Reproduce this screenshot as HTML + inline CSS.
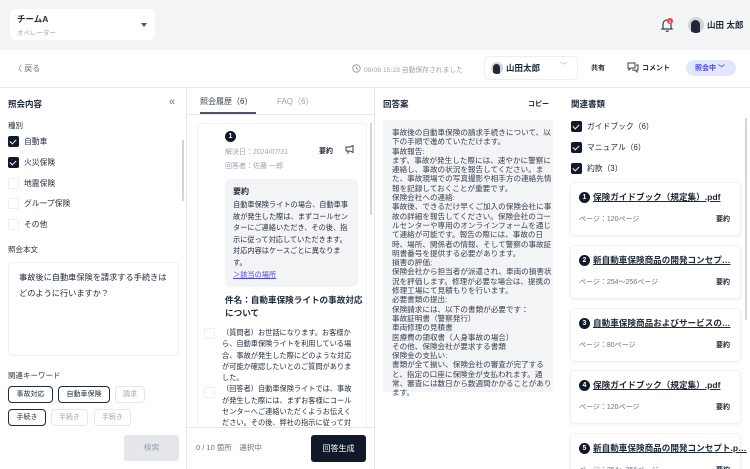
<!DOCTYPE html>
<html style="width:750px;height:469px;overflow:hidden"><head><meta charset="utf-8">
<style>
*{box-sizing:border-box;margin:0;padding:0}
body{width:750px;height:469px;overflow:hidden;position:relative;background:#fff;font-family:"Liberation Sans","Noto Sans CJK JP",sans-serif;color:#1f2937;font-size:8px}
.a{position:absolute;white-space:nowrap}
.b{font-weight:bold}
.g{color:#9ca3af}
.cb{position:absolute;width:11px;height:11px;border-radius:2px;background:#111827}
.cb:after{content:"";position:absolute;left:3px;top:1.5px;width:3px;height:5px;border:solid #fff;border-width:0 1.3px 1.3px 0;transform:rotate(45deg)}
.ce{position:absolute;width:11px;height:11px;border-radius:2px;border:1px solid #eceef1;background:#fff}
.chip{position:absolute;height:17px;border-radius:4px;font-size:7px;text-align:center;line-height:15px}
.chip.on{border:1.3px solid #1f2937}
.chip.off{border:1px solid #e5e7eb;color:#9ca3af}
.num{display:inline-block;width:11px;height:11px;border-radius:50%;background:#111827;color:#fff;font-size:7px;font-weight:bold;text-align:center;line-height:11px;vertical-align:middle}
.card{position:absolute;left:570px;width:171px;height:54px;background:#fff;border:1px solid #f0f1f3;border-radius:4px;box-shadow:0 1px 3px rgba(0,0,0,.05)}
.card .t{position:absolute;left:8px;top:8px;font-size:8.6px;font-weight:bold;white-space:nowrap}
.card .t u{text-decoration:underline;margin-left:3px}
.card .p{position:absolute;left:8px;top:31px;font-size:7px;color:#6b7280}
.card .s{position:absolute;right:10px;top:31px;font-size:7px;font-weight:bold}
</style></head><body>
<!-- header -->
<div class="a" style="left:0;top:0;width:750px;height:50px;background:#f3f4f6"></div>
<div class="a" style="left:10px;top:9px;width:145px;height:31px;background:#fff;border-radius:5px"></div>
<div class="a b" style="left:17px;top:13px;font-size:8.5px">チームA</div>
<div class="a g" style="left:17px;top:27px;font-size:6.5px">オペレーター</div>
<div class="a" style="left:141px;top:23px;width:0;height:0;border-left:3px solid transparent;border-right:3px solid transparent;border-top:4px solid #4b5563"></div>
<svg class="a" style="left:660px;top:17px" width="14" height="16" viewBox="0 0 14 16"><path d="M3 11V7a4 4 0 0 1 8 0v4l1 1H2z M6 13.5a1.3 1.3 0 0 0 2.5 0" fill="none" stroke="#374151" stroke-width="1.2"/><circle cx="10" cy="4" r="3" fill="#ef4444"/><text x="10" y="5.8" font-size="4.5" fill="#fff" text-anchor="middle" font-family="Liberation Sans">1</text></svg>
<div class="a" style="left:688px;top:17px;width:16px;height:16px;border-radius:50%;background:#d1d5db;overflow:hidden"><div style="position:absolute;left:3px;top:3px;width:9px;height:13px;background:#1f2937;border-radius:5px 5px 0 0"></div></div>
<div class="a b" style="left:707px;top:19px;font-size:8.5px">山田 太郎</div>
<!-- toolbar -->
<div class="a" style="left:0;top:87px;width:750px;height:1px;background:#e5e7eb"></div>
<div class="a g" style="left:14px;top:63px;font-size:8px;color:#6b7280">〈 戻る</div>
<svg class="a" style="left:352px;top:64px" width="9" height="9"><circle cx="4.5" cy="4.5" r="3.7" fill="none" stroke="#9ca3af" stroke-width="1"/><path d="M4.5 2.5v2.2l1.5 1" fill="none" stroke="#9ca3af"/></svg>
<div class="a g" style="left:364px;top:64px;font-size:6.8px">08/08 15:23 自動保存されました</div>
<div class="a" style="left:484px;top:56px;width:94px;height:24px;border:1px solid #eceef1;border-radius:4px"></div>
<div class="a" style="left:491px;top:62px;width:12px;height:12px;border-radius:50%;background:#d1d5db;overflow:hidden"><div style="position:absolute;left:2px;top:2px;width:7px;height:10px;background:#1f2937;border-radius:4px 4px 0 0"></div></div>
<div class="a b" style="left:506px;top:62px;font-size:8.5px">山田太郎</div>
<div class="a" style="left:560px;top:61px;font-size:7px;color:#9ca3af">﹀</div>
<div class="a b" style="left:591px;top:63px;font-size:7px">共有</div>
<svg class="a" style="left:627px;top:62px" width="12" height="11"><path d="M1 1h7v5H4l-2 2V6H1z M9 3h2v5h-1v2l-2-2H5" fill="none" stroke="#374151" stroke-width="1"/></svg>
<div class="a b" style="left:642px;top:63px;font-size:7px">コメント</div>
<div class="a" style="left:686px;top:60px;width:50px;height:16px;border-radius:8px;background:#e0e7ff"></div>
<div class="a b" style="left:695px;top:63px;font-size:7px;color:#4f46e5">照会中 ﹀</div>
<!-- dividers -->
<div class="a" style="left:186px;top:88px;width:1px;height:381px;background:#e5e7eb"></div>
<div class="a" style="left:374px;top:88px;width:1px;height:381px;background:#e5e7eb"></div>
<!-- left -->
<div class="a b" style="left:8px;top:98px;font-size:8.5px">照会内容</div>
<div class="a" style="left:169px;top:96px;font-size:11px;color:#6b7280">«</div>
<div class="a" style="left:8px;top:120px;font-size:7.5px">種別</div>
<div class="cb" style="left:8px;top:136px"></div><div class="a" style="left:24px;top:136px;font-size:7.8px">自動車</div>
<div class="cb" style="left:8px;top:157px"></div><div class="a" style="left:24px;top:157px;font-size:7.8px">火災保険</div>
<div class="ce" style="left:8px;top:178px"></div><div class="a" style="left:24px;top:178px;font-size:7.8px">地震保険</div>
<div class="ce" style="left:8px;top:198px"></div><div class="a" style="left:24px;top:198px;font-size:7.8px">グループ保険</div>
<div class="ce" style="left:8px;top:219px"></div><div class="a" style="left:24px;top:219px;font-size:7.8px">その他</div>
<div class="a" style="left:182px;top:140px;width:2px;height:61px;background:#d1d5db"></div>
<div class="a" style="left:8px;top:244px;font-size:7.5px">照会本文</div>
<div class="a" style="left:8px;top:262px;width:171px;height:94px;border:1px solid #eceef1;border-radius:5px"></div>
<div class="a" style="left:19px;top:270px;font-size:8.2px;line-height:16px">事故後に自動車保険を請求する手続きは<br>どのように行いますか？</div>
<div class="a" style="left:8px;top:370px;font-size:7.5px">関連キーワード</div>
<div class="chip on" style="left:8px;top:386px;width:45px">事故対応</div>
<div class="chip on" style="left:58px;top:386px;width:52px">自動車保険</div>
<div class="chip off" style="left:115px;top:386px;width:30px">請求</div>
<div class="chip on" style="left:8px;top:409px;width:38px">手続き</div>
<div class="chip off" style="left:51px;top:409px;width:37px">手続き</div>
<div class="chip off" style="left:94px;top:409px;width:37px">手続き</div>
<div class="a" style="left:124px;top:435px;width:55px;height:26px;background:#e5e7eb;border-radius:3px;color:#9ca3af;font-size:8px;text-align:center;line-height:26px">検索</div>
<!-- middle -->
<div class="a" style="left:200px;top:96px;font-size:8px;color:#374151">照会履歴（6）</div>
<div class="a" style="left:277px;top:96px;font-size:8px;color:#9ca3af">FAQ（6）</div>
<div class="a" style="left:187px;top:114px;width:187px;height:1px;background:#e5e7eb"></div>
<div class="a" style="left:200px;top:112px;width:56px;height:2px;background:#4b5563"></div>
<div class="a" style="left:197px;top:123px;width:170px;height:310px;border:1px solid #f0f1f3;border-radius:4px"></div>
<div class="a" style="left:370px;top:123px;width:2px;height:92px;background:#d1d5db"></div>
<div class="a" style="left:225px;top:131px"><span class="num">1</span></div>
<div class="a g" style="left:225px;top:147px;font-size:7px">解決日：2024/07/31</div>
<div class="a g" style="left:225px;top:161px;font-size:7px">回答者：佐藤 一郎</div>
<div class="a b" style="left:319px;top:146px;font-size:7px">要約</div>
<svg class="a" style="left:345px;top:145px" width="10" height="10"><path d="M1 2h4l3-1.5v7L5 6H1z M3 6v3" fill="none" stroke="#374151" stroke-width="1"/></svg>
<div class="a" style="left:225px;top:179px;width:133px;height:108px;background:#f3f4f6;border-radius:5px"></div>
<div class="a b" style="left:233px;top:186px;font-size:8px">要約</div>
<div class="a" style="left:233px;top:199px;font-size:7.2px;line-height:11.6px">自動車保険ライトの場合、自動車事<br>故が発生した際は、まずコールセン<br>ターにご連絡いただき、その後、指<br>示に従って対応していただきます。<br>対応内容はケースごとに異なりま<br>す。<br><span style="color:#4f46e5;text-decoration:underline">＞該当の場所</span></div>
<div class="a b" style="left:225px;top:294px;font-size:8.6px;line-height:12.5px">件名：自動車保険ライトの事故対応<br>について</div>
<div class="ce" style="left:204px;top:328px"></div>
<div class="a" style="left:222px;top:327px;font-size:7.2px;line-height:11.3px">（質問者）お世話になります。お客様か<br>ら、自動車保険ライトを利用している場<br>合、事故が発生した際にどのような対応<br>が可能か確認したいとのご質問がありま<br>した。<br>（回答者）自動車保険ライトでは、事故<br>が発生した際には、まずお客様にコール<br>センターへご連絡いただくようお伝えく<br>ださい。その後、弊社の指示に従って対</div>
<div class="ce" style="left:204px;top:387px"></div>
<div class="a" style="left:187px;top:427px;width:187px;height:42px;background:#fff;border-top:1px solid #e5e7eb"></div>
<div class="a" style="left:196px;top:442px;font-size:7.5px;color:#6b7280">0 / 10 箇所　選択中</div>
<div class="a" style="left:311px;top:435px;width:55px;height:27px;background:#111827;border-radius:3px;color:#fff;font-size:8px;text-align:center;line-height:27px">回答生成</div>
<!-- answer -->
<div class="a b" style="left:383px;top:98px;font-size:8.5px">回答案</div>
<div class="a b" style="left:528px;top:99px;font-size:7px">コピー</div>
<div class="a" style="left:383px;top:120px;width:170px;height:272px;background:#f3f4f6;border-radius:4px"></div>
<div class="a" style="left:392px;top:128px;font-size:7.6px;line-height:9.3px;color:#374151">事故後の自動車保険の請求手続きについて、以<br>下の手順で進めていただけます。<br>事故報告:<br>まず、事故が発生した際には、速やかに警察に<br>連絡し、事故の状況を報告してください。ま<br>た、事故現場での写真撮影や相手方の連絡先情<br>報を記録しておくことが重要です。<br>保険会社への連絡:<br>事故後、できるだけ早くご加入の保険会社に事<br>故の詳細を報告してください。保険会社のコー<br>ルセンターや専用のオンラインフォームを通じ<br>て連絡が可能です。報告の際には、事故の日<br>時、場所、関係者の情報、そして警察の事故証<br>明書番号を提供する必要があります。<br>損害の評価:<br>保険会社から担当者が派遣され、車両の損害状<br>況を評価します。修理が必要な場合は、提携の<br>修理工場にて見積もりを行います。<br>必要書類の提出:<br>保険請求には、以下の書類が必要です：<br>事故証明書（警察発行）<br>車両修理の見積書<br>医療費の領収書（人身事故の場合）<br>その他、保険会社が要求する書類<br>保険金の支払い:<br>書類が全て揃い、保険会社の審査が完了する<br>と、指定の口座に保険金が支払われます。通<br>常、審査には数日から数週間かかることがあり<br>ます。</div>
<!-- related -->
<div class="a b" style="left:571px;top:98px;font-size:8.5px">関連書類</div>
<div class="cb" style="left:571px;top:121px"></div><div class="a" style="left:587px;top:121px;font-size:7.8px">ガイドブック（6）</div>
<div class="cb" style="left:571px;top:142px"></div><div class="a" style="left:587px;top:142px;font-size:7.8px">マニュアル（6）</div>
<div class="cb" style="left:571px;top:163px"></div><div class="a" style="left:587px;top:163px;font-size:7.8px">約款（3）</div>
<div class="a" style="left:745px;top:118px;width:2px;height:202px;background:#d1d5db"></div>
<div class="card" style="top:182px"><div class="t"><span class="num">1</span><u>保険ガイドブック（規定集）.pdf</u></div><div class="p">ページ：120ページ</div><div class="s">要約</div></div>
<div class="card" style="top:245px"><div class="t"><span class="num">2</span><u>新自動車保険商品の開発コンセプ…</u></div><div class="p">ページ：254〜256ページ</div><div class="s">要約</div></div>
<div class="card" style="top:308px"><div class="t"><span class="num">3</span><u>自動車保険商品およびサービスの…</u></div><div class="p">ページ：80ページ</div><div class="s">要約</div></div>
<div class="card" style="top:370px"><div class="t"><span class="num">4</span><u>保険ガイドブック（規定集）.pdf</u></div><div class="p">ページ：120ページ</div><div class="s">要約</div></div>
<div class="card" style="top:433px"><div class="t"><span class="num">5</span><u>新自動車保険商品の開発コンセプト.p…</u></div><div class="p">ページ：254〜256ページ</div><div class="s">要約</div></div>
</body></html>
